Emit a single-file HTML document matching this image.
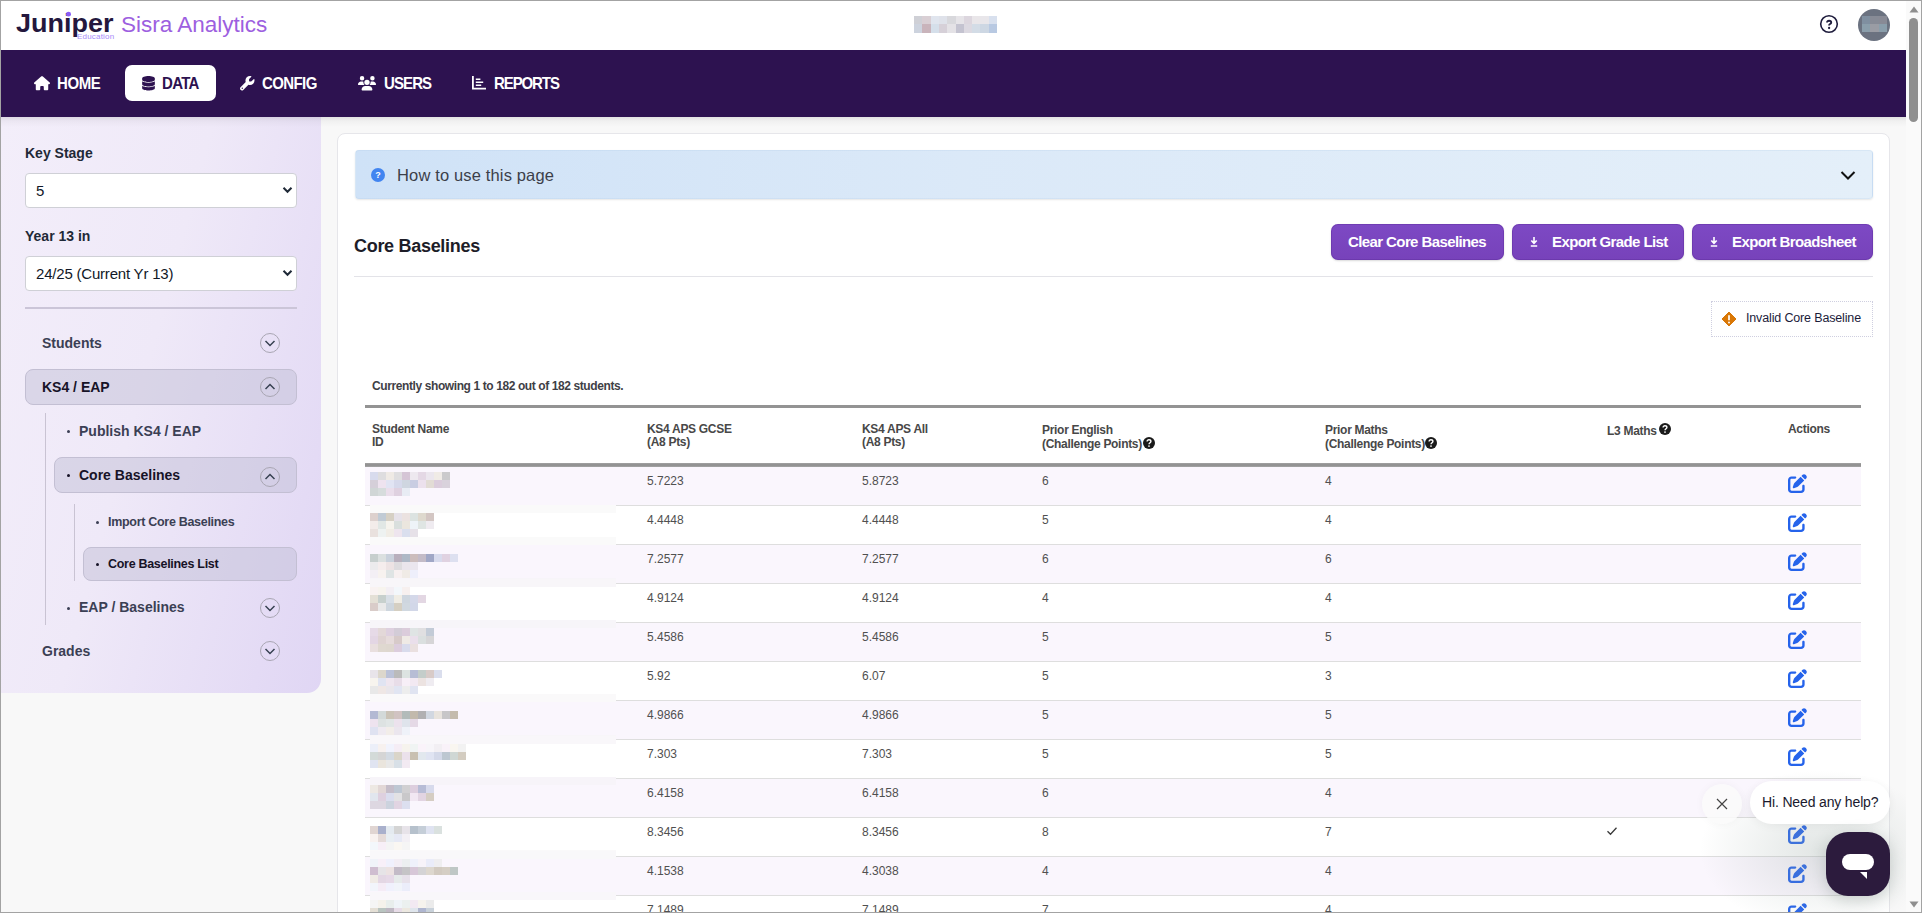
<!DOCTYPE html>
<html><head><meta charset="utf-8">
<style>
*{box-sizing:border-box;margin:0;padding:0}
html,body{width:1922px;height:913px;overflow:hidden;background:#f8f8f8;font-family:"Liberation Sans",sans-serif;color:#1f2937}
#frame{position:absolute;left:0;top:0;width:1922px;height:913px;border:1px solid #a3a3a3;pointer-events:none;z-index:100}
.abs{position:absolute}
#header{position:absolute;left:0;top:0;width:1906px;height:50px;background:#fff}
#nav{position:absolute;left:0;top:50px;width:1906px;height:67px;background:#2d1250}
#navshadow{position:absolute;left:0;top:117px;width:1906px;height:10px;background:linear-gradient(rgba(0,0,0,0.09),rgba(0,0,0,0.03) 40%,rgba(0,0,0,0))}
#sidebar{position:absolute;left:0;top:117px;width:321px;height:576px;border-bottom-right-radius:14px;background:linear-gradient(105deg,#f3eefa 0%,#efe9f8 45%,#e0d6f4 100%)}
#card{position:absolute;left:337px;top:133px;width:1553px;height:800px;background:#fff;border:1px solid #e6e6ea;border-radius:8px}
#scroll{position:absolute;left:1906px;top:0;width:16px;height:913px;background:#fafafa}
.nt{top:24px;font-size:15px;font-weight:bold;color:#fff;line-height:20px;letter-spacing:-0.4px;transform:scaleY(1.08);transform-origin:0 50%}
i{display:block}
.lbl{font-size:14px;font-weight:bold;color:#1f2937;line-height:18px}
.sel{left:25px;width:272px;height:35px;background:#fff;border:1px solid #cfd0d6;border-radius:4px;font-size:15px;color:#111827}
.sel span{position:absolute;left:10px;top:8px;line-height:18px;letter-spacing:-0.2px}
.sel .chev{position:absolute;left:256px;top:12px}
.mi{font-size:14px;font-weight:bold;color:#3b3f54;line-height:18px}
.mi2{font-size:12.5px;letter-spacing:-0.3px;font-weight:bold;color:#3b3f54;line-height:16px}
.cc{width:20px;height:20px;border:1px solid #a9a6b3;border-radius:50%}
.cc svg{position:absolute;left:-1px;top:-1px}
.box{background:rgba(192,190,214,0.48);border:1px solid #c3bfd3;border-radius:8px}
.dot{width:3px;height:3px;border-radius:50%;background:#3b3f54}
.btn{top:224px;height:36px;background:linear-gradient(#7d49c4,#7742ba);border-radius:7px;box-shadow:inset 0 0 0 1px rgba(90,40,150,0.35),0 1px 2px rgba(0,0,0,0.15)}
.btn span{position:absolute;top:9px;font-size:15px;font-weight:bold;color:#fff;line-height:18px;letter-spacing:-0.6px}
.th{font-size:12px;font-weight:bold;color:#484848;line-height:13px;letter-spacing:-0.3px}
.td{font-size:12px;color:#505050;line-height:14px}
.rl{left:365px;width:1496px;height:1px;background:#dedede}
.mos{left:370px;height:8px;display:flex}
.mos i{width:8px;height:8px}
</style></head><body>
<div id="header">
  <div class="abs" style="left:16px;top:10px;font-size:27px;font-weight:bold;color:#24173d;letter-spacing:0px;line-height:30px;transform:scaleY(0.93);transform-origin:0 0">Jun<span style="position:relative">i<span style="position:absolute;left:2px;top:2px;width:5px;height:5px;border-radius:50%;background:#8b5cf6"></span></span>per</div>
  <div class="abs" style="left:77px;top:33px;font-size:8px;color:#a78bfa;line-height:8px;letter-spacing:0.2px">Education</div>
  <div class="abs" style="left:121px;top:10px;font-size:22.5px;color:#9d5fe0;line-height:30px">Sisra Analytics</div>
  <div class="abs" style="left:914px;top:16px;width:83px;height:17px;display:grid;grid-template-columns:repeat(10,1fr);grid-template-rows:8px 9px">
    <i style="background:#cfd0d6"></i><i style="background:#d9cfd4"></i><i style="background:#e0e5ee"></i><i style="background:#dfe2ea"></i><i style="background:#d8d8dc"></i><i style="background:#e6e4e8"></i><i style="background:#dcd6de"></i><i style="background:#e9e6e9"></i><i style="background:#e8e6ea"></i><i style="background:#d8e0ee"></i>
    <i style="background:#cdd3de"></i><i style="background:#c9b4bb"></i><i style="background:#d5dfea"></i><i style="background:#d6d0d8"></i><i style="background:#e4e2e6"></i><i style="background:#c4c3d0"></i><i style="background:#dcd9e1"></i><i style="background:#d3dce6"></i><i style="background:#cdd7e3"></i><i style="background:#b8c9e2"></i>
  </div>
  <svg class="abs" style="left:1819px;top:14px" width="20" height="20" viewBox="0 0 20 20"><circle cx="10" cy="10" r="8.3" fill="none" stroke="#1f1d3d" stroke-width="1.6"/><path d="M8 8.6c0-1.2.9-1.9 2.1-1.9s2.1.7 2.1 1.7c0 .9-.6 1.3-1.2 1.6-.5.3-.9.6-.9 1.2v.4" fill="none" stroke="#1f1d3d" stroke-width="1.9"/><circle cx="10.1" cy="14" r="1.15" fill="#1f1d3d"/></svg>
  <div class="abs" style="left:1858px;top:9px;width:32px;height:32px;border-radius:50%;background:#6b7280;overflow:hidden">
    <div class="abs" style="left:4px;top:7px;width:25px;height:16px;display:grid;grid-template-columns:repeat(3,1fr);grid-template-rows:1fr 1fr">
      <i style="background:#7f8fa0"></i><i style="background:#878b96"></i><i style="background:#888a95"></i><i style="background:#8a9eab"></i><i style="background:#9a9ca4"></i><i style="background:#8a9eab"></i>
    </div>
  </div>
</div>
<div id="nav">
  <div class="abs" style="left:125px;top:15px;width:91px;height:36px;background:#fff;border-radius:7px"></div>
  <svg class="abs" style="left:34px;top:26px" width="16" height="14.5" viewBox="0 0 576 512"><path fill="#fff" d="M575.8 255.5c0 18-15 32.1-32 32.1h-32l.7 160.2c0 2.7-.2 5.4-.5 8.1V472c0 22.1-17.9 40-40 40H456c-1.1 0-2.2 0-3.3-.1-1.4.1-2.8.1-4.2.1H416 392c-22.1 0-40-17.9-40-40V448 384c0-17.7-14.3-32-32-32H256c-17.7 0-32 14.3-32 32v64 24c0 22.1-17.9 40-40 40H160 128.1c-1.5 0-3-.1-4.5-.2-1.2 .1-2.4 .2-3.6 .2H104c-22.1 0-40-17.9-40-40V360c0-.9 0-1.9 .1-2.8V287.6H32c-18 0-32-14-32-32.1 0-9 3-17 10-24L266.4 8c7-7 15-8 22-8s15 2 21 7L564.8 231.5c8 7 12 15 11 24z"/></svg>
  <div class="abs nt" style="left:57px">HOME</div>
  <svg class="abs" style="left:141.5px;top:26px" width="13" height="14.5" viewBox="0 0 448 512"><path fill="#2d1250" d="M448 80v48c0 44.2-100.3 80-224 80S0 172.2 0 128V80C0 35.8 100.3 0 224 0S448 35.8 448 80zM393.2 214.7c20.8-7.4 39.9-16.9 54.8-28.6V288c0 44.2-100.3 80-224 80S0 332.2 0 288V186.1c14.9 11.8 34 21.2 54.8 28.6C99.7 230.7 159.5 240 224 240s124.3-9.3 169.2-25.3zM0 346.1c14.9 11.8 34 21.2 54.8 28.6C99.7 390.7 159.5 400 224 400s124.3-9.3 169.2-25.3c20.8-7.4 39.9-16.9 54.8-28.6V432c0 44.2-100.3 80-224 80S0 476.2 0 432V346.1z"/></svg>
  <div class="abs nt" style="left:162px;color:#2d1250;letter-spacing:-0.7px">DATA</div>
  <svg class="abs" style="left:240px;top:26px" width="14.5" height="14.5" viewBox="0 0 512 512"><path fill="#fff" d="M352 320c88.4 0 160-71.6 160-160c0-15.3-2.2-30.1-6.2-44.2c-3.1-10.8-16.4-13.2-24.3-5.3l-76.8 76.8c-3 3-7.1 4.7-11.3 4.7H336c-8.8 0-16-7.2-16-16V118.6c0-4.2 1.7-8.3 4.7-11.3l76.8-76.8c7.9-7.9 5.4-21.2-5.3-24.3C382.1 2.2 367.3 0 352 0C263.6 0 192 71.6 192 160c0 19.1 3.4 37.5 9.5 54.5L19.9 396.1C7.2 408.8 0 426.1 0 444.1C0 481.6 30.4 512 67.9 512c18 0 35.3-7.2 48-19.9L297.5 310.5c17 6.2 35.4 9.5 54.5 9.5zM80 408a24 24 0 1 1 0 48 24 24 0 1 1 0-48z"/></svg>
  <div class="abs nt" style="left:262px;letter-spacing:-0.6px">CONFIG</div>
  <svg class="abs" style="left:358px;top:26px" width="18" height="14.5" viewBox="0 0 640 512"><path fill="#fff" d="M144 0a80 80 0 1 1 0 160A80 80 0 1 1 144 0zM512 0a80 80 0 1 1 0 160A80 80 0 1 1 512 0zM0 298.7C0 239.8 47.8 192 106.7 192h42.7c15.9 0 31 3.5 44.6 9.7c-1.3 7.2-1.9 14.7-1.9 22.3c0 38.2 16.8 72.5 43.3 96c-.2 0-.4 0-.7 0H21.3C9.6 320 0 310.4 0 298.7zM405.3 320c-.2 0-.4 0-.7 0c26.6-23.5 43.3-57.8 43.3-96c0-7.6-.7-15-1.9-22.3c13.6-6.3 28.7-9.7 44.6-9.7h42.7C592.2 192 640 239.8 640 298.7c0 11.8-9.6 21.3-21.3 21.3H405.3zM224 224a96 96 0 1 1 192 0 96 96 0 1 1 -192 0zM128 485.3C128 411.7 187.7 352 261.3 352H378.7C452.3 352 512 411.7 512 485.3c0 14.7-11.9 26.7-26.7 26.7H154.7c-14.7 0-26.7-11.9-26.7-26.7z"/></svg>
  <div class="abs nt" style="left:384px;letter-spacing:-0.9px">USERS</div>
  <svg class="abs" style="left:472px;top:76px;top:26px" width="14" height="13.5" viewBox="0 0 14 13.5"><path d="M0.9 0v12.6h13.1" fill="none" stroke="#fff" stroke-width="1.8"/><path d="M3.8 3.2h4.6M3.8 6.2h7.4M3.8 9.2h5.4" stroke="#fff" stroke-width="1.5"/></svg>
  <div class="abs nt" style="left:494px;letter-spacing:-1.1px">REPORTS</div>
</div>

<div id="sidebar">
  <div class="abs lbl" style="left:25px;top:27px">Key Stage</div>
  <div class="abs sel" style="top:56px"><span>5</span><svg class="chev" width="11" height="8" viewBox="0 0 11 8"><path d="M1.5 1.8l4 4 4-4" fill="none" stroke="#1f2937" stroke-width="2"/></svg></div>
  <div class="abs lbl" style="left:25px;top:110px">Year 13 in</div>
  <div class="abs sel" style="top:139px"><span>24/25 (Current Yr 13)</span><svg class="chev" width="11" height="8" viewBox="0 0 11 8"><path d="M1.5 1.8l4 4 4-4" fill="none" stroke="#1f2937" stroke-width="2"/></svg></div>
  <div class="abs" style="left:25px;top:190px;width:272px;height:2px;background:#cbc5d8"></div>

  <div class="abs mi" style="left:42px;top:217px">Students</div>
  <div class="abs cc" style="left:260px;top:216px"><svg width="20" height="20" viewBox="0 0 20 20"><path d="M5.5 8l4.5 4.5 4.5-4.5" fill="none" stroke="#374151" stroke-width="1.5"/></svg></div>

  <div class="abs box" style="left:25px;top:252px;width:272px;height:36px"></div>
  <div class="abs mi" style="left:42px;top:261px;color:#171327">KS4 / EAP</div>
  <div class="abs cc" style="left:260px;top:260px"><svg width="20" height="20" viewBox="0 0 20 20"><path d="M5.5 12l4.5-4.5 4.5 4.5" fill="none" stroke="#374151" stroke-width="1.5"/></svg></div>

  <div class="abs" style="left:45px;top:296px;width:1px;height:212px;background:#c9c3d3"></div>
  <div class="abs dot" style="left:67px;top:313px"></div>
  <div class="abs mi" style="left:79px;top:305px">Publish KS4 / EAP</div>

  <div class="abs box" style="left:54px;top:340px;width:243px;height:36px"></div>
  <div class="abs dot" style="left:67px;top:357px;background:#171327"></div>
  <div class="abs mi" style="left:79px;top:349px;color:#171327">Core Baselines</div>
  <div class="abs cc" style="left:260px;top:350px"><svg width="20" height="20" viewBox="0 0 20 20"><path d="M5.5 12l4.5-4.5 4.5 4.5" fill="none" stroke="#374151" stroke-width="1.5"/></svg></div>

  <div class="abs" style="left:74px;top:387px;width:1px;height:77px;background:#c9c3d3"></div>
  <div class="abs dot" style="left:96px;top:404px"></div>
  <div class="abs mi2" style="left:108px;top:397px">Import Core Baselines</div>
  <div class="abs box" style="left:83px;top:430px;width:214px;height:34px"></div>
  <div class="abs dot" style="left:96px;top:446px;background:#171327"></div>
  <div class="abs mi2" style="left:108px;top:439px;color:#171327">Core Baselines List</div>

  <div class="abs dot" style="left:67px;top:490px"></div>
  <div class="abs mi" style="left:79px;top:481px">EAP / Baselines</div>
  <div class="abs cc" style="left:260px;top:481px"><svg width="20" height="20" viewBox="0 0 20 20"><path d="M5.5 8l4.5 4.5 4.5-4.5" fill="none" stroke="#374151" stroke-width="1.5"/></svg></div>

  <div class="abs mi" style="left:42px;top:525px">Grades</div>
  <div class="abs cc" style="left:260px;top:524px"><svg width="20" height="20" viewBox="0 0 20 20"><path d="M5.5 8l4.5 4.5 4.5-4.5" fill="none" stroke="#374151" stroke-width="1.5"/></svg></div>
</div>

<div id="navshadow"></div>
<div id="card"></div>
<div class="abs" id="info" style="left:355px;top:150px;width:1518px;height:49px;border-radius:4px;background:linear-gradient(90deg,#cfe2f7 0%,#dbe9f8 40%,#e4eff9 100%);border:1px solid rgba(170,200,230,0.2);box-shadow:0 1px 2px rgba(0,0,0,0.1)">
  <div class="abs" style="left:15px;top:17px;width:14px;height:14px;border-radius:50%;background:#4285f0;color:#fff;font-size:9px;font-weight:bold;text-align:center;line-height:14px">?</div>
  <div class="abs" style="left:41px;top:14px;font-size:16.5px;color:#3c3f4a;line-height:20px;letter-spacing:0.15px">How to use this page</div>
  <svg class="abs" style="left:1484px;top:19px" width="16" height="11" viewBox="0 0 16 11"><path d="M1.5 2l6.5 6.5 6.5-6.5" fill="none" stroke="#111" stroke-width="2"/></svg>
</div>
<div class="abs" style="left:354px;top:236px;font-size:18px;font-weight:bold;color:#1d1d28;line-height:20px;letter-spacing:-0.3px">Core Baselines</div>
<div class="abs btn" style="left:1331px;width:173px"><span style="left:17px">Clear Core Baselines</span></div>
<div class="abs btn" style="left:1512px;width:172px"><svg class="abs" style="left:18px;top:12px" width="8" height="11" viewBox="0 0 8 11"><path d="M4 1v6M1.3 4.5L4 7.3 6.7 4.5M0.8 10h6.4" fill="none" stroke="#fff" stroke-width="1.6"/></svg><span style="left:40px">Export Grade List</span></div>
<div class="abs btn" style="left:1692px;width:181px"><svg class="abs" style="left:18px;top:12px" width="8" height="11" viewBox="0 0 8 11"><path d="M4 1v6M1.3 4.5L4 7.3 6.7 4.5M0.8 10h6.4" fill="none" stroke="#fff" stroke-width="1.6"/></svg><span style="left:40px">Export Broadsheet</span></div>
<div class="abs" style="left:354px;top:276px;width:1519px;height:1px;background:#e3e3e8"></div>
<div class="abs" style="left:1711px;top:301px;width:162px;height:36px;border:1px dotted #cfcfe0">
  <svg class="abs" style="left:9px;top:9px" width="16" height="16" viewBox="0 0 16 16"><path d="M8 1l7 7-7 7-7-7z" fill="#d97706" stroke="#d97706" stroke-width="1" stroke-linejoin="round"/><path d="M8 4.3v5" stroke="#fff" stroke-width="1.7"/><circle cx="8" cy="11.5" r="0.95" fill="#fff"/></svg>
  <div class="abs" style="left:34px;top:8px;font-size:12.5px;color:#1b1b3a;line-height:16px;letter-spacing:-0.15px">Invalid Core Baseline</div>
</div>
<div class="abs" style="left:372px;top:379px;font-size:12px;font-weight:bold;color:#3f3f46;line-height:14px;letter-spacing:-0.4px">Currently showing 1 to 182 out of 182 students.</div>

<div class="abs" style="left:365px;top:405px;width:1496px;height:3px;background:#939393"></div>
<div class="abs th" style="left:372px;top:423px">Student Name<br>ID</div>
<div class="abs th" style="left:647px;top:423px">KS4 APS GCSE<br>(A8 Pts)</div>
<div class="abs th" style="left:862px;top:423px">KS4 APS All<br>(A8 Pts)</div>
<div class="abs th" style="left:1042px;top:423px;line-height:14px">Prior English<br>(Challenge Points)</div>
<svg class="abs qi" style="left:1143px;top:437px" width="12" height="12" viewBox="0 0 12 12"><circle cx="6" cy="6" r="6" fill="#1a1a1a"/><path d="M4.1 4.6c0-1.1.8-1.8 1.9-1.8s1.9.7 1.9 1.6c0 .9-.6 1.2-1.2 1.6-.4.3-.6.5-.6 1v.3" fill="none" stroke="#fff" stroke-width="1.4"/><circle cx="6" cy="9.1" r=".85" fill="#fff"/></svg>
<div class="abs th" style="left:1325px;top:423px;line-height:14px">Prior Maths<br>(Challenge Points)</div>
<svg class="abs qi" style="left:1425px;top:437px" width="12" height="12" viewBox="0 0 12 12"><circle cx="6" cy="6" r="6" fill="#1a1a1a"/><path d="M4.1 4.6c0-1.1.8-1.8 1.9-1.8s1.9.7 1.9 1.6c0 .9-.6 1.2-1.2 1.6-.4.3-.6.5-.6 1v.3" fill="none" stroke="#fff" stroke-width="1.4"/><circle cx="6" cy="9.1" r=".85" fill="#fff"/></svg>
<div class="abs th" style="left:1607px;top:425px">L3 Maths</div>
<svg class="abs qi" style="left:1659px;top:423px" width="12" height="12" viewBox="0 0 12 12"><circle cx="6" cy="6" r="6" fill="#1a1a1a"/><path d="M4.1 4.6c0-1.1.8-1.8 1.9-1.8s1.9.7 1.9 1.6c0 .9-.6 1.2-1.2 1.6-.4.3-.6.5-.6 1v.3" fill="none" stroke="#fff" stroke-width="1.4"/><circle cx="6" cy="9.1" r=".85" fill="#fff"/></svg>
<div class="abs th" style="left:1788px;top:423px">Actions</div>
<div class="abs" style="left:365px;top:463px;width:1496px;height:4px;background:linear-gradient(#a5a5a5,#939393 30%,#939393 70%,#a8a8a8)"></div>
<div class="abs" style="left:365px;top:467px;width:1496px;height:38px;background:#faf6fd"></div>
<div class="abs rl" style="top:505px"></div>
<div class="abs" style="left:365px;top:506px;width:1496px;height:38px;background:#fff"></div>
<div class="abs rl" style="top:544px"></div>
<div class="abs" style="left:365px;top:545px;width:1496px;height:38px;background:#faf6fd"></div>
<div class="abs rl" style="top:583px"></div>
<div class="abs" style="left:365px;top:584px;width:1496px;height:38px;background:#fff"></div>
<div class="abs rl" style="top:622px"></div>
<div class="abs" style="left:365px;top:623px;width:1496px;height:38px;background:#faf6fd"></div>
<div class="abs rl" style="top:661px"></div>
<div class="abs" style="left:365px;top:662px;width:1496px;height:38px;background:#fff"></div>
<div class="abs rl" style="top:700px"></div>
<div class="abs" style="left:365px;top:701px;width:1496px;height:38px;background:#faf6fd"></div>
<div class="abs rl" style="top:739px"></div>
<div class="abs" style="left:365px;top:740px;width:1496px;height:38px;background:#fff"></div>
<div class="abs rl" style="top:778px"></div>
<div class="abs" style="left:365px;top:779px;width:1496px;height:38px;background:#faf6fd"></div>
<div class="abs rl" style="top:817px"></div>
<div class="abs" style="left:365px;top:818px;width:1496px;height:38px;background:#fff"></div>
<div class="abs rl" style="top:856px"></div>
<div class="abs" style="left:365px;top:857px;width:1496px;height:38px;background:#faf6fd"></div>
<div class="abs rl" style="top:895px"></div>
<div class="abs" style="left:365px;top:896px;width:1496px;height:38px;background:#fff"></div>
<div class="abs rl" style="top:934px"></div>
<div class="abs" style="left:370px;top:472px;width:246px;height:8px;background:rgb(250, 246, 253)"></div>
<div class="abs" style="left:370px;top:480px;width:246px;height:8px;background:rgb(250, 246, 253)"></div>
<div class="abs" style="left:370px;top:488px;width:246px;height:8px;background:rgb(250, 246, 253)"></div>
<div class="abs" style="left:370px;top:496px;width:246px;height:8px;background:rgb(250, 246, 253)"></div>
<div class="abs" style="left:370px;top:505px;width:246px;height:8px;background:rgb(250, 250, 250)"></div>
<div class="abs" style="left:370px;top:513px;width:246px;height:8px;background:rgb(255, 255, 255)"></div>
<div class="abs" style="left:370px;top:521px;width:246px;height:8px;background:rgb(255, 255, 255)"></div>
<div class="abs" style="left:370px;top:529px;width:246px;height:8px;background:rgb(255, 255, 255)"></div>
<div class="abs" style="left:370px;top:537px;width:246px;height:8px;background:rgb(250, 250, 250)"></div>
<div class="abs" style="left:370px;top:546px;width:246px;height:8px;background:rgb(250, 246, 253)"></div>
<div class="abs" style="left:370px;top:554px;width:246px;height:8px;background:rgb(250, 246, 253)"></div>
<div class="abs" style="left:370px;top:562px;width:246px;height:8px;background:rgb(250, 246, 253)"></div>
<div class="abs" style="left:370px;top:570px;width:246px;height:8px;background:rgb(250, 246, 253)"></div>
<div class="abs" style="left:370px;top:578px;width:246px;height:8px;background:rgb(247, 245, 249)"></div>
<div class="abs" style="left:370px;top:579px;width:246px;height:8px;background:rgb(248, 246, 249)"></div>
<div class="abs" style="left:370px;top:587px;width:246px;height:8px;background:rgb(255, 255, 255)"></div>
<div class="abs" style="left:370px;top:595px;width:246px;height:8px;background:rgb(255, 255, 255)"></div>
<div class="abs" style="left:370px;top:603px;width:246px;height:8px;background:rgb(255, 255, 255)"></div>
<div class="abs" style="left:370px;top:611px;width:246px;height:8px;background:rgb(255, 255, 255)"></div>
<div class="abs" style="left:370px;top:620px;width:246px;height:8px;background:rgb(247, 245, 249)"></div>
<div class="abs" style="left:370px;top:628px;width:246px;height:8px;background:rgb(250, 246, 253)"></div>
<div class="abs" style="left:370px;top:636px;width:246px;height:8px;background:rgb(250, 246, 253)"></div>
<div class="abs" style="left:370px;top:644px;width:246px;height:8px;background:rgb(250, 246, 253)"></div>
<div class="abs" style="left:370px;top:652px;width:246px;height:8px;background:rgb(250, 246, 253)"></div>
<div class="abs" style="left:370px;top:662px;width:246px;height:8px;background:rgb(255, 255, 255)"></div>
<div class="abs" style="left:370px;top:670px;width:246px;height:8px;background:rgb(255, 255, 255)"></div>
<div class="abs" style="left:370px;top:678px;width:246px;height:8px;background:rgb(255, 255, 255)"></div>
<div class="abs" style="left:370px;top:686px;width:246px;height:8px;background:rgb(255, 255, 255)"></div>
<div class="abs" style="left:370px;top:694px;width:246px;height:8px;background:rgb(250, 249, 250)"></div>
<div class="abs" style="left:370px;top:703px;width:246px;height:8px;background:rgb(250, 246, 253)"></div>
<div class="abs" style="left:370px;top:711px;width:246px;height:8px;background:rgb(250, 246, 253)"></div>
<div class="abs" style="left:370px;top:719px;width:246px;height:8px;background:rgb(250, 246, 253)"></div>
<div class="abs" style="left:370px;top:727px;width:246px;height:8px;background:rgb(250, 246, 253)"></div>
<div class="abs" style="left:370px;top:735px;width:246px;height:8px;background:rgb(248, 246, 249)"></div>
<div class="abs" style="left:370px;top:736px;width:246px;height:8px;background:rgb(249, 247, 250)"></div>
<div class="abs" style="left:370px;top:744px;width:246px;height:8px;background:rgb(255, 255, 255)"></div>
<div class="abs" style="left:370px;top:752px;width:246px;height:8px;background:rgb(255, 255, 255)"></div>
<div class="abs" style="left:370px;top:760px;width:246px;height:8px;background:rgb(255, 255, 255)"></div>
<div class="abs" style="left:370px;top:768px;width:246px;height:8px;background:rgb(255, 255, 255)"></div>
<div class="abs" style="left:370px;top:777px;width:246px;height:8px;background:rgb(247, 244, 249)"></div>
<div class="abs" style="left:370px;top:785px;width:246px;height:8px;background:rgb(250, 246, 253)"></div>
<div class="abs" style="left:370px;top:793px;width:246px;height:8px;background:rgb(250, 246, 253)"></div>
<div class="abs" style="left:370px;top:801px;width:246px;height:8px;background:rgb(250, 246, 253)"></div>
<div class="abs" style="left:370px;top:809px;width:246px;height:8px;background:rgb(250, 246, 253)"></div>
<div class="abs" style="left:370px;top:818px;width:246px;height:8px;background:rgb(255, 255, 255)"></div>
<div class="abs" style="left:370px;top:826px;width:246px;height:8px;background:rgb(255, 255, 255)"></div>
<div class="abs" style="left:370px;top:834px;width:246px;height:8px;background:rgb(255, 255, 255)"></div>
<div class="abs" style="left:370px;top:842px;width:246px;height:8px;background:rgb(255, 255, 255)"></div>
<div class="abs" style="left:370px;top:850px;width:246px;height:8px;background:rgb(250, 249, 250)"></div>
<div class="abs" style="left:370px;top:851px;width:246px;height:8px;background:rgb(249, 248, 250)"></div>
<div class="abs" style="left:370px;top:859px;width:246px;height:8px;background:rgb(250, 246, 253)"></div>
<div class="abs" style="left:370px;top:867px;width:246px;height:8px;background:rgb(250, 246, 253)"></div>
<div class="abs" style="left:370px;top:875px;width:246px;height:8px;background:rgb(250, 246, 253)"></div>
<div class="abs" style="left:370px;top:883px;width:246px;height:8px;background:rgb(250, 246, 253)"></div>
<div class="abs" style="left:370px;top:892px;width:246px;height:8px;background:rgb(249, 247, 250)"></div>
<div class="abs" style="left:370px;top:900px;width:246px;height:8px;background:rgb(255, 255, 255)"></div>
<div class="abs" style="left:370px;top:908px;width:246px;height:8px;background:rgb(255, 255, 255)"></div>
<div class="abs mos" style="top:472px;width:80px"><i style="background:rgb(216, 219, 237)"></i><i style="background:rgb(222, 221, 223)"></i><i style="background:rgb(239, 234, 229)"></i><i style="background:rgb(223, 222, 224)"></i><i style="background:rgb(213, 197, 214)"></i><i style="background:rgb(237, 232, 239)"></i><i style="background:rgb(228, 216, 229)"></i><i style="background:rgb(235, 230, 238)"></i><i style="background:rgb(240, 235, 230)"></i><i style="background:rgb(203, 202, 204)"></i></div>
<div class="abs mos" style="top:480px;width:80px"><i style="background:rgb(213, 207, 217)"></i><i style="background:rgb(238, 227, 239)"></i><i style="background:rgb(225, 228, 243)"></i><i style="background:rgb(214, 217, 235)"></i><i style="background:rgb(207, 214, 224)"></i><i style="background:rgb(201, 205, 226)"></i><i style="background:rgb(236, 225, 237)"></i><i style="background:rgb(226, 220, 213)"></i><i style="background:rgb(219, 205, 220)"></i><i style="background:rgb(217, 210, 220)"></i></div>
<div class="abs mos" style="top:488px;width:40px"><i style="background:rgb(208, 214, 214)"></i><i style="background:rgb(214, 220, 220)"></i><i style="background:rgb(234, 222, 235)"></i><i style="background:rgb(223, 209, 224)"></i><i style="background:rgb(232, 236, 244)"></i></div>
<div class="abs mos" style="top:513px;width:64px"><i style="background:rgb(221, 209, 206)"></i><i style="background:rgb(193, 203, 213)"></i><i style="background:rgb(214, 208, 196)"></i><i style="background:rgb(230, 226, 233)"></i><i style="background:rgb(235, 226, 224)"></i><i style="background:rgb(220, 227, 225)"></i><i style="background:rgb(222, 217, 206)"></i><i style="background:rgb(211, 198, 195)"></i></div>
<div class="abs mos" style="top:521px;width:64px"><i style="background:rgb(243, 236, 234)"></i><i style="background:rgb(225, 231, 229)"></i><i style="background:rgb(246, 243, 237)"></i><i style="background:rgb(217, 223, 221)"></i><i style="background:rgb(235, 230, 222)"></i><i style="background:rgb(238, 243, 248)"></i><i style="background:rgb(223, 229, 227)"></i><i style="background:rgb(239, 235, 240)"></i></div>
<div class="abs mos" style="top:529px;width:48px"><i style="background:rgb(233, 225, 222)"></i><i style="background:rgb(238, 242, 241)"></i><i style="background:rgb(241, 237, 230)"></i><i style="background:rgb(238, 229, 238)"></i><i style="background:rgb(218, 223, 238)"></i><i style="background:rgb(230, 225, 232)"></i></div>
<div class="abs mos" style="top:554px;width:88px"><i style="background:rgb(199, 207, 206)"></i><i style="background:rgb(219, 224, 224)"></i><i style="background:rgb(201, 209, 220)"></i><i style="background:rgb(184, 175, 189)"></i><i style="background:rgb(174, 184, 198)"></i><i style="background:rgb(204, 189, 188)"></i><i style="background:rgb(195, 187, 199)"></i><i style="background:rgb(160, 167, 198)"></i><i style="background:rgb(216, 219, 237)"></i><i style="background:rgb(224, 210, 225)"></i><i style="background:rgb(221, 224, 240)"></i></div>
<div class="abs mos" style="top:562px;width:48px"><i style="background:rgb(236, 235, 237)"></i><i style="background:rgb(245, 237, 237)"></i><i style="background:rgb(237, 227, 228)"></i><i style="background:rgb(222, 220, 223)"></i><i style="background:rgb(234, 229, 236)"></i><i style="background:rgb(235, 230, 238)"></i></div>
<div class="abs mos" style="top:570px;width:48px"><i style="background:rgb(243, 239, 245)"></i><i style="background:rgb(247, 242, 239)"></i><i style="background:rgb(223, 228, 228)"></i><i style="background:rgb(247, 240, 240)"></i><i style="background:rgb(240, 235, 230)"></i><i style="background:rgb(238, 239, 251)"></i></div>
<div class="abs mos" style="top:587px;width:40px"><i style="background:rgb(249, 243, 242)"></i><i style="background:rgb(247, 244, 238)"></i><i style="background:rgb(243, 239, 244)"></i><i style="background:rgb(243, 247, 251)"></i><i style="background:rgb(247, 240, 239)"></i></div>
<div class="abs mos" style="top:595px;width:56px"><i style="background:rgb(228, 224, 214)"></i><i style="background:rgb(199, 208, 205)"></i><i style="background:rgb(216, 223, 230)"></i><i style="background:rgb(240, 237, 229)"></i><i style="background:rgb(206, 214, 223)"></i><i style="background:rgb(212, 216, 233)"></i><i style="background:rgb(227, 215, 227)"></i></div>
<div class="abs mos" style="top:603px;width:48px"><i style="background:rgb(217, 204, 201)"></i><i style="background:rgb(233, 233, 233)"></i><i style="background:rgb(206, 214, 222)"></i><i style="background:rgb(213, 207, 194)"></i><i style="background:rgb(208, 216, 224)"></i><i style="background:rgb(210, 215, 232)"></i></div>
<div class="abs mos" style="top:628px;width:64px"><i style="background:rgb(230, 218, 231)"></i><i style="background:rgb(227, 216, 216)"></i><i style="background:rgb(222, 208, 223)"></i><i style="background:rgb(211, 204, 215)"></i><i style="background:rgb(219, 204, 219)"></i><i style="background:rgb(223, 228, 228)"></i><i style="background:rgb(224, 223, 225)"></i><i style="background:rgb(195, 203, 215)"></i></div>
<div class="abs mos" style="top:636px;width:64px"><i style="background:rgb(227, 214, 228)"></i><i style="background:rgb(223, 211, 210)"></i><i style="background:rgb(230, 219, 219)"></i><i style="background:rgb(215, 202, 201)"></i><i style="background:rgb(239, 234, 229)"></i><i style="background:rgb(234, 223, 235)"></i><i style="background:rgb(218, 223, 223)"></i><i style="background:rgb(214, 213, 215)"></i></div>
<div class="abs mos" style="top:644px;width:48px"><i style="background:rgb(233, 223, 223)"></i><i style="background:rgb(223, 216, 208)"></i><i style="background:rgb(222, 215, 207)"></i><i style="background:rgb(220, 205, 221)"></i><i style="background:rgb(216, 219, 236)"></i><i style="background:rgb(234, 224, 224)"></i></div>
<div class="abs mos" style="top:670px;width:72px"><i style="background:rgb(232, 228, 234)"></i><i style="background:rgb(220, 215, 204)"></i><i style="background:rgb(187, 194, 216)"></i><i style="background:rgb(187, 187, 187)"></i><i style="background:rgb(220, 227, 225)"></i><i style="background:rgb(183, 189, 213)"></i><i style="background:rgb(196, 205, 202)"></i><i style="background:rgb(216, 203, 200)"></i><i style="background:rgb(218, 222, 237)"></i></div>
<div class="abs mos" style="top:678px;width:64px"><i style="background:rgb(247, 244, 238)"></i><i style="background:rgb(224, 228, 242)"></i><i style="background:rgb(239, 230, 239)"></i><i style="background:rgb(232, 221, 232)"></i><i style="background:rgb(247, 239, 247)"></i><i style="background:rgb(242, 233, 242)"></i><i style="background:rgb(236, 227, 225)"></i><i style="background:rgb(239, 236, 241)"></i></div>
<div class="abs mos" style="top:686px;width:48px"><i style="background:rgb(232, 232, 232)"></i><i style="background:rgb(239, 231, 229)"></i><i style="background:rgb(233, 230, 235)"></i><i style="background:rgb(225, 229, 242)"></i><i style="background:rgb(237, 237, 237)"></i><i style="background:rgb(224, 228, 241)"></i></div>
<div class="abs mos" style="top:711px;width:88px"><i style="background:rgb(179, 185, 211)"></i><i style="background:rgb(211, 217, 217)"></i><i style="background:rgb(203, 195, 183)"></i><i style="background:rgb(209, 195, 194)"></i><i style="background:rgb(178, 187, 186)"></i><i style="background:rgb(194, 185, 172)"></i><i style="background:rgb(177, 176, 178)"></i><i style="background:rgb(209, 215, 225)"></i><i style="background:rgb(232, 227, 221)"></i><i style="background:rgb(199, 198, 200)"></i><i style="background:rgb(196, 187, 173)"></i></div>
<div class="abs mos" style="top:719px;width:48px"><i style="background:rgb(238, 227, 239)"></i><i style="background:rgb(221, 226, 226)"></i><i style="background:rgb(225, 230, 230)"></i><i style="background:rgb(236, 226, 237)"></i><i style="background:rgb(223, 228, 236)"></i><i style="background:rgb(229, 217, 230)"></i></div>
<div class="abs mos" style="top:727px;width:40px"><i style="background:rgb(223, 226, 241)"></i><i style="background:rgb(239, 234, 241)"></i><i style="background:rgb(242, 237, 233)"></i><i style="background:rgb(235, 230, 238)"></i><i style="background:rgb(239, 242, 249)"></i></div>
<div class="abs mos" style="top:744px;width:96px"><i style="background:rgb(236, 239, 249)"></i><i style="background:rgb(247, 241, 239)"></i><i style="background:rgb(241, 243, 253)"></i><i style="background:rgb(245, 237, 245)"></i><i style="background:rgb(246, 243, 237)"></i><i style="background:rgb(240, 244, 243)"></i><i style="background:rgb(250, 243, 250)"></i><i style="background:rgb(247, 245, 249)"></i><i style="background:rgb(242, 239, 243)"></i><i style="background:rgb(249, 242, 249)"></i><i style="background:rgb(249, 246, 240)"></i><i style="background:rgb(242, 242, 242)"></i></div>
<div class="abs mos" style="top:752px;width:96px"><i style="background:rgb(211, 218, 216)"></i><i style="background:rgb(213, 213, 213)"></i><i style="background:rgb(211, 218, 226)"></i><i style="background:rgb(218, 213, 201)"></i><i style="background:rgb(235, 225, 235)"></i><i style="background:rgb(200, 192, 177)"></i><i style="background:rgb(226, 232, 238)"></i><i style="background:rgb(224, 228, 242)"></i><i style="background:rgb(212, 217, 233)"></i><i style="background:rgb(189, 199, 209)"></i><i style="background:rgb(207, 215, 212)"></i><i style="background:rgb(211, 204, 192)"></i></div>
<div class="abs mos" style="top:760px;width:40px"><i style="background:rgb(224, 228, 241)"></i><i style="background:rgb(234, 229, 221)"></i><i style="background:rgb(232, 232, 232)"></i><i style="background:rgb(216, 224, 231)"></i><i style="background:rgb(242, 234, 242)"></i></div>
<div class="abs mos" style="top:785px;width:64px"><i style="background:rgb(237, 232, 227)"></i><i style="background:rgb(226, 215, 214)"></i><i style="background:rgb(197, 189, 201)"></i><i style="background:rgb(190, 199, 211)"></i><i style="background:rgb(209, 208, 210)"></i><i style="background:rgb(221, 206, 222)"></i><i style="background:rgb(183, 188, 214)"></i><i style="background:rgb(215, 218, 236)"></i></div>
<div class="abs mos" style="top:793px;width:64px"><i style="background:rgb(225, 230, 238)"></i><i style="background:rgb(222, 208, 223)"></i><i style="background:rgb(218, 221, 238)"></i><i style="background:rgb(227, 226, 228)"></i><i style="background:rgb(201, 200, 202)"></i><i style="background:rgb(241, 231, 242)"></i><i style="background:rgb(226, 212, 226)"></i><i style="background:rgb(213, 205, 195)"></i></div>
<div class="abs mos" style="top:801px;width:40px"><i style="background:rgb(221, 215, 225)"></i><i style="background:rgb(221, 215, 225)"></i><i style="background:rgb(204, 211, 222)"></i><i style="background:rgb(225, 212, 226)"></i><i style="background:rgb(220, 223, 239)"></i></div>
<div class="abs mos" style="top:826px;width:72px"><i style="background:rgb(224, 213, 210)"></i><i style="background:rgb(169, 176, 204)"></i><i style="background:rgb(228, 234, 240)"></i><i style="background:rgb(212, 212, 212)"></i><i style="background:rgb(231, 227, 233)"></i><i style="background:rgb(182, 193, 204)"></i><i style="background:rgb(197, 206, 216)"></i><i style="background:rgb(223, 227, 241)"></i><i style="background:rgb(218, 225, 223)"></i></div>
<div class="abs mos" style="top:834px;width:40px"><i style="background:rgb(248, 242, 240)"></i><i style="background:rgb(229, 219, 217)"></i><i style="background:rgb(232, 238, 243)"></i><i style="background:rgb(230, 233, 245)"></i><i style="background:rgb(243, 240, 245)"></i></div>
<div class="abs mos" style="top:842px;width:40px"><i style="background:rgb(243, 247, 251)"></i><i style="background:rgb(247, 239, 247)"></i><i style="background:rgb(244, 244, 244)"></i><i style="background:rgb(250, 247, 242)"></i><i style="background:rgb(245, 245, 245)"></i></div>
<div class="abs mos" style="top:859px;width:72px"><i style="background:rgb(240, 243, 249)"></i><i style="background:rgb(248, 240, 249)"></i><i style="background:rgb(240, 241, 253)"></i><i style="background:rgb(243, 238, 245)"></i><i style="background:rgb(236, 239, 240)"></i><i style="background:rgb(239, 241, 252)"></i><i style="background:rgb(247, 243, 249)"></i><i style="background:rgb(234, 236, 249)"></i><i style="background:rgb(239, 238, 240)"></i></div>
<div class="abs mos" style="top:867px;width:88px"><i style="background:rgb(207, 189, 208)"></i><i style="background:rgb(230, 228, 231)"></i><i style="background:rgb(236, 226, 226)"></i><i style="background:rgb(195, 187, 199)"></i><i style="background:rgb(197, 196, 198)"></i><i style="background:rgb(215, 199, 216)"></i><i style="background:rgb(212, 211, 213)"></i><i style="background:rgb(221, 215, 206)"></i><i style="background:rgb(210, 202, 192)"></i><i style="background:rgb(213, 206, 196)"></i><i style="background:rgb(191, 199, 198)"></i></div>
<div class="abs mos" style="top:875px;width:40px"><i style="background:rgb(240, 235, 230)"></i><i style="background:rgb(227, 215, 228)"></i><i style="background:rgb(230, 217, 231)"></i><i style="background:rgb(230, 234, 234)"></i><i style="background:rgb(231, 225, 234)"></i></div>
<div class="abs mos" style="top:883px;width:40px"><i style="background:rgb(242, 245, 251)"></i><i style="background:rgb(245, 236, 246)"></i><i style="background:rgb(240, 241, 253)"></i><i style="background:rgb(241, 244, 250)"></i><i style="background:rgb(235, 237, 250)"></i></div>
<div class="abs mos" style="top:900px;width:64px"><i style="background:rgb(245, 245, 245)"></i><i style="background:rgb(245, 242, 235)"></i><i style="background:rgb(232, 238, 236)"></i><i style="background:rgb(239, 244, 248)"></i><i style="background:rgb(235, 240, 239)"></i><i style="background:rgb(242, 233, 242)"></i><i style="background:rgb(246, 243, 237)"></i><i style="background:rgb(235, 235, 235)"></i></div>
<div class="abs mos" style="top:908px;width:64px"><i style="background:rgb(228, 223, 213)"></i><i style="background:rgb(185, 196, 192)"></i><i style="background:rgb(191, 184, 195)"></i><i style="background:rgb(231, 220, 231)"></i><i style="background:rgb(236, 232, 224)"></i><i style="background:rgb(223, 229, 236)"></i><i style="background:rgb(175, 182, 208)"></i><i style="background:rgb(200, 209, 218)"></i></div>
<div class="abs td" style="left:647px;top:474px">5.7223</div>
<div class="abs td" style="left:862px;top:474px">5.8723</div>
<div class="abs td" style="left:1042px;top:474px">6</div>
<div class="abs td" style="left:1325px;top:474px">4</div>
<svg class="abs" style="left:1788px;top:474px" width="19" height="19" viewBox="0 0 512 512"><path fill="#2563eb" d="M471.6 21.7c-21.9-21.9-57.3-21.9-79.2 0L362.3 51.7l97.9 97.9 30.1-30.1c21.9-21.9 21.9-57.3 0-79.2L471.6 21.7zm-299.2 220c-6.1 6.1-10.8 13.6-13.5 21.9l-29.6 88.8c-2.9 8.6-.6 18.1 5.8 24.6s15.9 8.7 24.6 5.8l88.8-29.6c8.2-2.7 15.7-7.4 21.9-13.5L437.7 172.3 339.7 74.3 172.4 241.7zM96 64C43 64 0 107 0 160V416c0 53 43 96 96 96H352c53 0 96-43 96-96V320c0-17.7-14.3-32-32-32s-32 14.3-32 32v96c0 17.7-14.3 32-32 32H96c-17.7 0-32-14.3-32-32V160c0-17.7 14.3-32 32-32h96c17.7 0 32-14.3 32-32s-14.3-32-32-32H96z"/></svg>
<div class="abs td" style="left:647px;top:513px">4.4448</div>
<div class="abs td" style="left:862px;top:513px">4.4448</div>
<div class="abs td" style="left:1042px;top:513px">5</div>
<div class="abs td" style="left:1325px;top:513px">4</div>
<svg class="abs" style="left:1788px;top:513px" width="19" height="19" viewBox="0 0 512 512"><path fill="#2563eb" d="M471.6 21.7c-21.9-21.9-57.3-21.9-79.2 0L362.3 51.7l97.9 97.9 30.1-30.1c21.9-21.9 21.9-57.3 0-79.2L471.6 21.7zm-299.2 220c-6.1 6.1-10.8 13.6-13.5 21.9l-29.6 88.8c-2.9 8.6-.6 18.1 5.8 24.6s15.9 8.7 24.6 5.8l88.8-29.6c8.2-2.7 15.7-7.4 21.9-13.5L437.7 172.3 339.7 74.3 172.4 241.7zM96 64C43 64 0 107 0 160V416c0 53 43 96 96 96H352c53 0 96-43 96-96V320c0-17.7-14.3-32-32-32s-32 14.3-32 32v96c0 17.7-14.3 32-32 32H96c-17.7 0-32-14.3-32-32V160c0-17.7 14.3-32 32-32h96c17.7 0 32-14.3 32-32s-14.3-32-32-32H96z"/></svg>
<div class="abs td" style="left:647px;top:552px">7.2577</div>
<div class="abs td" style="left:862px;top:552px">7.2577</div>
<div class="abs td" style="left:1042px;top:552px">6</div>
<div class="abs td" style="left:1325px;top:552px">6</div>
<svg class="abs" style="left:1788px;top:552px" width="19" height="19" viewBox="0 0 512 512"><path fill="#2563eb" d="M471.6 21.7c-21.9-21.9-57.3-21.9-79.2 0L362.3 51.7l97.9 97.9 30.1-30.1c21.9-21.9 21.9-57.3 0-79.2L471.6 21.7zm-299.2 220c-6.1 6.1-10.8 13.6-13.5 21.9l-29.6 88.8c-2.9 8.6-.6 18.1 5.8 24.6s15.9 8.7 24.6 5.8l88.8-29.6c8.2-2.7 15.7-7.4 21.9-13.5L437.7 172.3 339.7 74.3 172.4 241.7zM96 64C43 64 0 107 0 160V416c0 53 43 96 96 96H352c53 0 96-43 96-96V320c0-17.7-14.3-32-32-32s-32 14.3-32 32v96c0 17.7-14.3 32-32 32H96c-17.7 0-32-14.3-32-32V160c0-17.7 14.3-32 32-32h96c17.7 0 32-14.3 32-32s-14.3-32-32-32H96z"/></svg>
<div class="abs td" style="left:647px;top:591px">4.9124</div>
<div class="abs td" style="left:862px;top:591px">4.9124</div>
<div class="abs td" style="left:1042px;top:591px">4</div>
<div class="abs td" style="left:1325px;top:591px">4</div>
<svg class="abs" style="left:1788px;top:591px" width="19" height="19" viewBox="0 0 512 512"><path fill="#2563eb" d="M471.6 21.7c-21.9-21.9-57.3-21.9-79.2 0L362.3 51.7l97.9 97.9 30.1-30.1c21.9-21.9 21.9-57.3 0-79.2L471.6 21.7zm-299.2 220c-6.1 6.1-10.8 13.6-13.5 21.9l-29.6 88.8c-2.9 8.6-.6 18.1 5.8 24.6s15.9 8.7 24.6 5.8l88.8-29.6c8.2-2.7 15.7-7.4 21.9-13.5L437.7 172.3 339.7 74.3 172.4 241.7zM96 64C43 64 0 107 0 160V416c0 53 43 96 96 96H352c53 0 96-43 96-96V320c0-17.7-14.3-32-32-32s-32 14.3-32 32v96c0 17.7-14.3 32-32 32H96c-17.7 0-32-14.3-32-32V160c0-17.7 14.3-32 32-32h96c17.7 0 32-14.3 32-32s-14.3-32-32-32H96z"/></svg>
<div class="abs td" style="left:647px;top:630px">5.4586</div>
<div class="abs td" style="left:862px;top:630px">5.4586</div>
<div class="abs td" style="left:1042px;top:630px">5</div>
<div class="abs td" style="left:1325px;top:630px">5</div>
<svg class="abs" style="left:1788px;top:630px" width="19" height="19" viewBox="0 0 512 512"><path fill="#2563eb" d="M471.6 21.7c-21.9-21.9-57.3-21.9-79.2 0L362.3 51.7l97.9 97.9 30.1-30.1c21.9-21.9 21.9-57.3 0-79.2L471.6 21.7zm-299.2 220c-6.1 6.1-10.8 13.6-13.5 21.9l-29.6 88.8c-2.9 8.6-.6 18.1 5.8 24.6s15.9 8.7 24.6 5.8l88.8-29.6c8.2-2.7 15.7-7.4 21.9-13.5L437.7 172.3 339.7 74.3 172.4 241.7zM96 64C43 64 0 107 0 160V416c0 53 43 96 96 96H352c53 0 96-43 96-96V320c0-17.7-14.3-32-32-32s-32 14.3-32 32v96c0 17.7-14.3 32-32 32H96c-17.7 0-32-14.3-32-32V160c0-17.7 14.3-32 32-32h96c17.7 0 32-14.3 32-32s-14.3-32-32-32H96z"/></svg>
<div class="abs td" style="left:647px;top:669px">5.92</div>
<div class="abs td" style="left:862px;top:669px">6.07</div>
<div class="abs td" style="left:1042px;top:669px">5</div>
<div class="abs td" style="left:1325px;top:669px">3</div>
<svg class="abs" style="left:1788px;top:669px" width="19" height="19" viewBox="0 0 512 512"><path fill="#2563eb" d="M471.6 21.7c-21.9-21.9-57.3-21.9-79.2 0L362.3 51.7l97.9 97.9 30.1-30.1c21.9-21.9 21.9-57.3 0-79.2L471.6 21.7zm-299.2 220c-6.1 6.1-10.8 13.6-13.5 21.9l-29.6 88.8c-2.9 8.6-.6 18.1 5.8 24.6s15.9 8.7 24.6 5.8l88.8-29.6c8.2-2.7 15.7-7.4 21.9-13.5L437.7 172.3 339.7 74.3 172.4 241.7zM96 64C43 64 0 107 0 160V416c0 53 43 96 96 96H352c53 0 96-43 96-96V320c0-17.7-14.3-32-32-32s-32 14.3-32 32v96c0 17.7-14.3 32-32 32H96c-17.7 0-32-14.3-32-32V160c0-17.7 14.3-32 32-32h96c17.7 0 32-14.3 32-32s-14.3-32-32-32H96z"/></svg>
<div class="abs td" style="left:647px;top:708px">4.9866</div>
<div class="abs td" style="left:862px;top:708px">4.9866</div>
<div class="abs td" style="left:1042px;top:708px">5</div>
<div class="abs td" style="left:1325px;top:708px">5</div>
<svg class="abs" style="left:1788px;top:708px" width="19" height="19" viewBox="0 0 512 512"><path fill="#2563eb" d="M471.6 21.7c-21.9-21.9-57.3-21.9-79.2 0L362.3 51.7l97.9 97.9 30.1-30.1c21.9-21.9 21.9-57.3 0-79.2L471.6 21.7zm-299.2 220c-6.1 6.1-10.8 13.6-13.5 21.9l-29.6 88.8c-2.9 8.6-.6 18.1 5.8 24.6s15.9 8.7 24.6 5.8l88.8-29.6c8.2-2.7 15.7-7.4 21.9-13.5L437.7 172.3 339.7 74.3 172.4 241.7zM96 64C43 64 0 107 0 160V416c0 53 43 96 96 96H352c53 0 96-43 96-96V320c0-17.7-14.3-32-32-32s-32 14.3-32 32v96c0 17.7-14.3 32-32 32H96c-17.7 0-32-14.3-32-32V160c0-17.7 14.3-32 32-32h96c17.7 0 32-14.3 32-32s-14.3-32-32-32H96z"/></svg>
<div class="abs td" style="left:647px;top:747px">7.303</div>
<div class="abs td" style="left:862px;top:747px">7.303</div>
<div class="abs td" style="left:1042px;top:747px">5</div>
<div class="abs td" style="left:1325px;top:747px">5</div>
<svg class="abs" style="left:1788px;top:747px" width="19" height="19" viewBox="0 0 512 512"><path fill="#2563eb" d="M471.6 21.7c-21.9-21.9-57.3-21.9-79.2 0L362.3 51.7l97.9 97.9 30.1-30.1c21.9-21.9 21.9-57.3 0-79.2L471.6 21.7zm-299.2 220c-6.1 6.1-10.8 13.6-13.5 21.9l-29.6 88.8c-2.9 8.6-.6 18.1 5.8 24.6s15.9 8.7 24.6 5.8l88.8-29.6c8.2-2.7 15.7-7.4 21.9-13.5L437.7 172.3 339.7 74.3 172.4 241.7zM96 64C43 64 0 107 0 160V416c0 53 43 96 96 96H352c53 0 96-43 96-96V320c0-17.7-14.3-32-32-32s-32 14.3-32 32v96c0 17.7-14.3 32-32 32H96c-17.7 0-32-14.3-32-32V160c0-17.7 14.3-32 32-32h96c17.7 0 32-14.3 32-32s-14.3-32-32-32H96z"/></svg>
<div class="abs td" style="left:647px;top:786px">6.4158</div>
<div class="abs td" style="left:862px;top:786px">6.4158</div>
<div class="abs td" style="left:1042px;top:786px">6</div>
<div class="abs td" style="left:1325px;top:786px">4</div>
<svg class="abs" style="left:1788px;top:786px" width="19" height="19" viewBox="0 0 512 512"><path fill="#2563eb" d="M471.6 21.7c-21.9-21.9-57.3-21.9-79.2 0L362.3 51.7l97.9 97.9 30.1-30.1c21.9-21.9 21.9-57.3 0-79.2L471.6 21.7zm-299.2 220c-6.1 6.1-10.8 13.6-13.5 21.9l-29.6 88.8c-2.9 8.6-.6 18.1 5.8 24.6s15.9 8.7 24.6 5.8l88.8-29.6c8.2-2.7 15.7-7.4 21.9-13.5L437.7 172.3 339.7 74.3 172.4 241.7zM96 64C43 64 0 107 0 160V416c0 53 43 96 96 96H352c53 0 96-43 96-96V320c0-17.7-14.3-32-32-32s-32 14.3-32 32v96c0 17.7-14.3 32-32 32H96c-17.7 0-32-14.3-32-32V160c0-17.7 14.3-32 32-32h96c17.7 0 32-14.3 32-32s-14.3-32-32-32H96z"/></svg>
<div class="abs td" style="left:647px;top:825px">8.3456</div>
<div class="abs td" style="left:862px;top:825px">8.3456</div>
<div class="abs td" style="left:1042px;top:825px">8</div>
<div class="abs td" style="left:1325px;top:825px">7</div>
<svg class="abs" style="left:1606px;top:826px" width="12" height="10" viewBox="0 0 12 10"><path d="M1.5 5.2l3 3 6-6.5" fill="none" stroke="#3a3a3a" stroke-width="1.3"/></svg>
<svg class="abs" style="left:1788px;top:825px" width="19" height="19" viewBox="0 0 512 512"><path fill="#2563eb" d="M471.6 21.7c-21.9-21.9-57.3-21.9-79.2 0L362.3 51.7l97.9 97.9 30.1-30.1c21.9-21.9 21.9-57.3 0-79.2L471.6 21.7zm-299.2 220c-6.1 6.1-10.8 13.6-13.5 21.9l-29.6 88.8c-2.9 8.6-.6 18.1 5.8 24.6s15.9 8.7 24.6 5.8l88.8-29.6c8.2-2.7 15.7-7.4 21.9-13.5L437.7 172.3 339.7 74.3 172.4 241.7zM96 64C43 64 0 107 0 160V416c0 53 43 96 96 96H352c53 0 96-43 96-96V320c0-17.7-14.3-32-32-32s-32 14.3-32 32v96c0 17.7-14.3 32-32 32H96c-17.7 0-32-14.3-32-32V160c0-17.7 14.3-32 32-32h96c17.7 0 32-14.3 32-32s-14.3-32-32-32H96z"/></svg>
<div class="abs td" style="left:647px;top:864px">4.1538</div>
<div class="abs td" style="left:862px;top:864px">4.3038</div>
<div class="abs td" style="left:1042px;top:864px">4</div>
<div class="abs td" style="left:1325px;top:864px">4</div>
<svg class="abs" style="left:1788px;top:864px" width="19" height="19" viewBox="0 0 512 512"><path fill="#2563eb" d="M471.6 21.7c-21.9-21.9-57.3-21.9-79.2 0L362.3 51.7l97.9 97.9 30.1-30.1c21.9-21.9 21.9-57.3 0-79.2L471.6 21.7zm-299.2 220c-6.1 6.1-10.8 13.6-13.5 21.9l-29.6 88.8c-2.9 8.6-.6 18.1 5.8 24.6s15.9 8.7 24.6 5.8l88.8-29.6c8.2-2.7 15.7-7.4 21.9-13.5L437.7 172.3 339.7 74.3 172.4 241.7zM96 64C43 64 0 107 0 160V416c0 53 43 96 96 96H352c53 0 96-43 96-96V320c0-17.7-14.3-32-32-32s-32 14.3-32 32v96c0 17.7-14.3 32-32 32H96c-17.7 0-32-14.3-32-32V160c0-17.7 14.3-32 32-32h96c17.7 0 32-14.3 32-32s-14.3-32-32-32H96z"/></svg>
<div class="abs td" style="left:647px;top:903px">7.1489</div>
<div class="abs td" style="left:862px;top:903px">7.1489</div>
<div class="abs td" style="left:1042px;top:903px">7</div>
<div class="abs td" style="left:1325px;top:903px">4</div>
<svg class="abs" style="left:1788px;top:903px" width="19" height="19" viewBox="0 0 512 512"><path fill="#2563eb" d="M471.6 21.7c-21.9-21.9-57.3-21.9-79.2 0L362.3 51.7l97.9 97.9 30.1-30.1c21.9-21.9 21.9-57.3 0-79.2L471.6 21.7zm-299.2 220c-6.1 6.1-10.8 13.6-13.5 21.9l-29.6 88.8c-2.9 8.6-.6 18.1 5.8 24.6s15.9 8.7 24.6 5.8l88.8-29.6c8.2-2.7 15.7-7.4 21.9-13.5L437.7 172.3 339.7 74.3 172.4 241.7zM96 64C43 64 0 107 0 160V416c0 53 43 96 96 96H352c53 0 96-43 96-96V320c0-17.7-14.3-32-32-32s-32 14.3-32 32v96c0 17.7-14.3 32-32 32H96c-17.7 0-32-14.3-32-32V160c0-17.7 14.3-32 32-32h96c17.7 0 32-14.3 32-32s-14.3-32-32-32H96z"/></svg>
<div class="abs" style="left:1660px;top:760px;width:246px;height:153px;background:radial-gradient(ellipse 120px 80px at 160px 90px,rgba(150,165,160,0.28),rgba(150,165,160,0) 100%)"></div>
<div class="abs" style="left:1702px;top:784px;width:40px;height:40px;border-radius:50%;background:rgba(250,250,250,0.85);box-shadow:0 0 8px rgba(0,0,0,0.04)">
  <svg class="abs" style="left:14px;top:14px" width="12" height="12" viewBox="0 0 12 12"><path d="M1 1l10 10M11 1L1 11" stroke="#444" stroke-width="1.2"/></svg>
</div>
<div class="abs" style="left:1750px;top:781px;width:140px;height:43px;border-radius:22px;background:#fff;box-shadow:0 2px 10px rgba(0,0,0,0.05)">
  <div class="abs" style="left:12px;top:13px;font-size:14px;color:#1a1a2e;line-height:16px;white-space:nowrap;letter-spacing:-0.15px">Hi. Need any help?</div>
</div>
<div class="abs" style="left:1826px;top:832px;width:64px;height:64px;border-radius:22px;background:#2c1b3d;box-shadow:0 4px 16px rgba(60,80,70,0.25)">
  <div class="abs" style="left:16px;top:22px;width:32px;height:16px;border-radius:8px;background:#fff"></div>
  <svg class="abs" style="left:34px;top:40px" width="8" height="8" viewBox="0 0 8 8"><path d="M0 0h7v7z" fill="#fff"/></svg>
</div>

<div id="scroll"><svg class="abs" style="left:3px;top:6px" width="10" height="7" viewBox="0 0 10 7"><path d="M5 0.5L9.5 6.5H0.5z" fill="#8f8f8f"/></svg><div class="abs" style="left:3px;top:18px;width:9px;height:104px;border-radius:5px;background:#8f8f8f"></div><svg class="abs" style="left:3px;top:901px" width="10" height="7" viewBox="0 0 10 7"><path d="M5 6.5L9.5 0.5H0.5z" fill="#8f8f8f"/></svg></div>
<div id="frame"></div>
</body></html>
